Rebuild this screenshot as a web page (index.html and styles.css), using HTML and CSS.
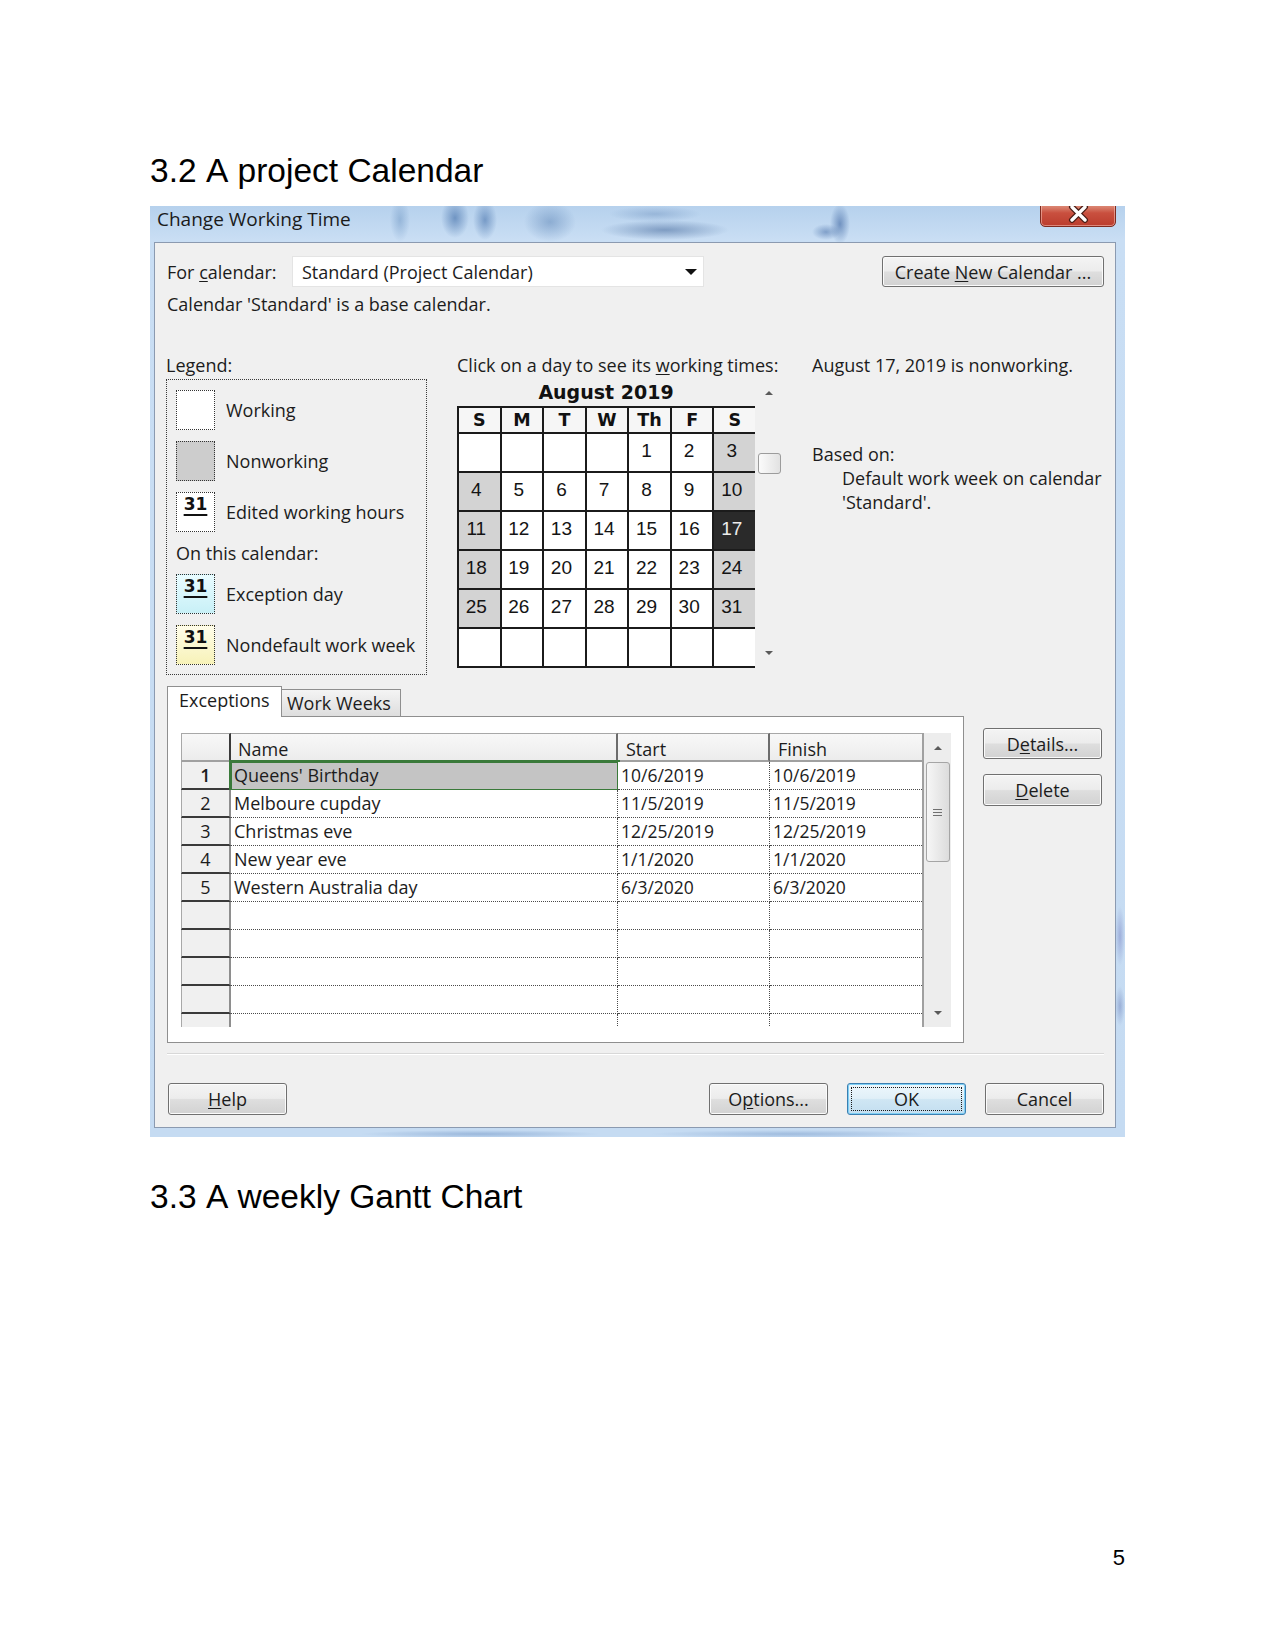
FILE: index.html
```html
<!DOCTYPE html>
<html lang="en">
<head>
<meta charset="utf-8">
<title>3.2 A project Calendar</title>
<link rel="stylesheet" href="styles.css">
</head>
<body>
<div class="page">
  <h2 class="heading h-first">3.2 A project Calendar</h2>

  <div class="dialog">
    <div class="titlebar">Change Working Time</div>
    <div class="close-btn">
      <svg width="76" height="31" viewBox="0 0 76 31">
        <path d="M32 11 L45 24 M45 11 L32 24" stroke="#4a1d16" stroke-width="6" stroke-linecap="round"/>
        <path d="M32 11 L45 24 M45 11 L32 24" stroke="#ffffff" stroke-width="3.4" stroke-linecap="round"/>
      </svg>
    </div>

    <div class="frame">
      <div class="row-top">
        <span class="lbl-for">For <u>c</u>alendar:</span>
        <div class="combo"><span class="combo-text">Standard (Project Calendar)</span><span class="combo-arrow"></span></div>
        <button class="btn btn-create"><span>Create <u>N</u>ew Calendar ...</span></button>
      </div>
      <div class="base-note">Calendar 'Standard' is a base calendar.</div>

      <div class="middle">
        <div class="legend-col">
          <div class="cap">Legend:</div>
          <div class="legend-box">
            <div class="leg-item"><span class="sw sw-work"></span><span>Working</span></div>
            <div class="leg-item"><span class="sw sw-non"></span><span>Nonworking</span></div>
            <div class="leg-item"><span class="sw sw-edit"><b>31</b></span><span>Edited working hours</span></div>
            <div class="on-cal">On this calendar:</div>
            <div class="leg-item"><span class="sw sw-exc"><b>31</b></span><span>Exception day</span></div>
            <div class="leg-item"><span class="sw sw-nd"><b>31</b></span><span>Nondefault work week</span></div>
          </div>
        </div>

        <div class="cal-col">
          <div class="cap">Click on a day to see its <u>w</u>orking times:</div>
          <div class="cal-wrap">
            <div class="cal">
              <div class="cal-title">August 2019</div>
              <div class="cal-grid">
                <div class="dh">S</div><div class="dh">M</div><div class="dh">T</div><div class="dh">W</div><div class="dh">Th</div><div class="dh">F</div><div class="dh">S</div>
                <div class="d"></div><div class="d"></div><div class="d"></div><div class="d"></div><div class="d">1</div><div class="d">2</div><div class="d nw">3</div>
                <div class="d nw">4</div><div class="d">5</div><div class="d">6</div><div class="d">7</div><div class="d">8</div><div class="d">9</div><div class="d nw">10</div>
                <div class="d nw">11</div><div class="d">12</div><div class="d">13</div><div class="d">14</div><div class="d">15</div><div class="d">16</div><div class="d sel">17</div>
                <div class="d nw">18</div><div class="d">19</div><div class="d">20</div><div class="d">21</div><div class="d">22</div><div class="d">23</div><div class="d nw">24</div>
                <div class="d nw">25</div><div class="d">26</div><div class="d">27</div><div class="d">28</div><div class="d">29</div><div class="d">30</div><div class="d nw">31</div>
                <div class="d"></div><div class="d"></div><div class="d"></div><div class="d"></div><div class="d"></div><div class="d"></div><div class="d"></div>
              </div>
            </div>
            <div class="cal-scroll">
              <div class="arr-box"><span class="tri-up"></span></div>
              <div class="cal-thumb"></div>
              <div class="arr-box arr-bottom"><span class="tri-down"></span></div>
            </div>
          </div>
        </div>

        <div class="info-col">
          <div class="cap">August 17, 2019 is nonworking.</div>
          <div class="based">Based on:</div>
          <div class="based-desc">Default work week on calendar<br>'Standard'.</div>
        </div>
      </div>

      <div class="lower">
        <div class="tabs-area">
          <div class="tabs">
            <div class="tab tab-active">Exceptions</div>
            <div class="tab tab-inactive">Work Weeks</div>
          </div>
          <div class="panel">
            <div class="grid-wrap">
              <div class="xt">
                <div class="hc hc-corner"></div><div class="hc hc-name">Name</div><div class="hc hc-start">Start</div><div class="hc hc-fin">Finish</div>

                <div class="rh rh-sel">1</div><div class="c sel">Queens' Birthday</div><div class="c dt">10/6/2019</div><div class="c dt fin">10/6/2019</div>
                <div class="rh">2</div><div class="c">Melboure cupday</div><div class="c dt">11/5/2019</div><div class="c dt fin">11/5/2019</div>
                <div class="rh">3</div><div class="c">Christmas eve</div><div class="c dt">12/25/2019</div><div class="c dt fin">12/25/2019</div>
                <div class="rh">4</div><div class="c">New year eve</div><div class="c dt">1/1/2020</div><div class="c dt fin">1/1/2020</div>
                <div class="rh">5</div><div class="c">Western Australia day</div><div class="c dt">6/3/2020</div><div class="c dt fin">6/3/2020</div>
                <div class="rh"></div><div class="c"></div><div class="c"></div><div class="c fin"></div>
                <div class="rh"></div><div class="c"></div><div class="c"></div><div class="c fin"></div>
                <div class="rh"></div><div class="c"></div><div class="c"></div><div class="c fin"></div>
                <div class="rh"></div><div class="c"></div><div class="c"></div><div class="c fin"></div>
                <div class="rh"></div><div class="c"></div><div class="c"></div><div class="c fin"></div>
              </div>
              <div class="vscroll">
                <div class="vs-up"><span class="tri-up"></span></div>
                <div class="vs-thumb"><span class="grip"></span></div>
                <div class="vs-down"><span class="tri-down"></span></div>
              </div>
            </div>
          </div>
        </div>
        <div class="side-btns">
          <button class="btn btn-details"><span>D<u>e</u>tails...</span></button>
          <button class="btn btn-delete"><span><u>D</u>elete</span></button>
        </div>
      </div>

      <div class="sep"></div>

      <div class="bottom-btns">
        <button class="btn btn-help"><span><u>H</u>elp</span></button>
        <button class="btn btn-options"><span>O<u>p</u>tions...</span></button>
        <button class="btn btn-ok"><span class="focus">OK</span></button>
        <button class="btn btn-cancel"><span>Cancel</span></button>
      </div>
    </div>
  </div>

  <h2 class="heading h-second">3.3 A weekly Gantt Chart</h2>

  <div class="footer">5</div>
</div>
</body>
</html>
```

FILE: styles.css
```css
* { box-sizing: border-box; }

html, body {
  margin: 0;
  padding: 0;
  background: #ffffff;
}

.page {
  width: 1275px;
  height: 1651px;
  padding: 0 150px 80px 150px;
  display: flex;
  flex-direction: column;
  font-family: "Liberation Sans", Arial, sans-serif;
  color: #000;
}

.heading {
  font-family: "Liberation Sans", Arial, sans-serif;
  font-size: 33.5px;
  font-weight: normal;
  font-kerning: none;
  line-height: 38px;
  margin: 0;
  color: #000;
}
.h-first { margin-top: 152px; margin-bottom: 16px; }
.h-second { margin-top: 41px; }

.footer {
  margin-top: auto;
  text-align: right;
  font-size: 22px;
  line-height: 26px;
}

/* ---------- dialog ---------- */
.dialog {
  position: relative;
  overflow: hidden;
  height: 931px;
  flex: none;
  padding: 0 9px 9px 4px;
  background:
    radial-gradient(ellipse 10px 22px at 250px 14px, rgba(110, 150, 195, 0.5), transparent),
    radial-gradient(ellipse 14px 20px at 305px 12px, rgba(60, 105, 165, 0.6), transparent),
    radial-gradient(ellipse 12px 20px at 335px 14px, rgba(60, 105, 165, 0.55), transparent),
    radial-gradient(ellipse 26px 20px at 400px 16px, rgba(90, 130, 180, 0.5), transparent),
    radial-gradient(ellipse 64px 10px at 515px 24px, rgba(70, 105, 155, 0.55), transparent),
    radial-gradient(ellipse 46px 8px at 505px 8px, rgba(110, 145, 190, 0.45), transparent),
    radial-gradient(ellipse 10px 20px at 690px 18px, rgba(60, 100, 160, 0.6), transparent),
    radial-gradient(ellipse 14px 8px at 676px 26px, rgba(60, 100, 160, 0.5), transparent),
    radial-gradient(ellipse 5px 30px at 970px 730px, rgba(110, 120, 190, 0.45), transparent),
    radial-gradient(ellipse 5px 20px at 970px 800px, rgba(90, 110, 175, 0.4), transparent),
    radial-gradient(ellipse 120px 4px at 330px 928px, rgba(90, 130, 185, 0.4), transparent),
    radial-gradient(ellipse 140px 4px at 640px 928px, rgba(90, 130, 185, 0.35), transparent),
    linear-gradient(#b6d1ed 0px, #c9def4 34px, #c5dbf2 100%);
}

.titlebar {
  height: 36px;
  padding-left: 3px;
  font-family: "Open Sans", "Noto Sans", sans-serif;
  font-size: 19px;
  line-height: 26px;
  color: #1a1a1a;
  white-space: nowrap;
}

.close-btn {
  position: absolute;
  top: -10px;
  right: 9px;
  width: 76px;
  height: 31px;
  border: 1px solid #7e2a1f;
  border-radius: 5px;
  background: linear-gradient(#eaa393 0%, #d9806d 35%, #c9503f 55%, #bb3c2d 100%);
  box-shadow: inset 0 0 0 1px rgba(255, 210, 200, 0.5);
}
.close-btn svg { display: block; margin: -1px; }

.frame {
  height: 886px;
  border: 1px solid #8b9ab0;
  background: #f0f0f0;
  padding: 13px 11px 12px 12px;
  display: flex;
  flex-direction: column;
  font-family: "Open Sans", "Noto Sans", sans-serif;
  font-size: 18px;
  line-height: 24px;
  color: #1c1c1c;
}

u { text-underline-offset: 2px; }

/* top row */
.row-top {
  display: flex;
  align-items: center;
  height: 31px;
}
.lbl-for { width: 125px; flex: none; white-space: nowrap; }
.combo {
  width: 412px;
  height: 31px;
  flex: none;
  background: #ffffff;
  border: 1px solid #e4e4e4;
  display: flex;
  align-items: center;
  padding: 0 6px 0 9px;
}
.combo-text { flex: 1; white-space: nowrap; }
.combo-arrow {
  width: 0;
  height: 0;
  border-left: 6px solid transparent;
  border-right: 6px solid transparent;
  border-top: 6px solid #111;
}

.btn {
  font: inherit;
  color: #1c1c1c;
  border: 1px solid #707070;
  border-radius: 3px;
  background: linear-gradient(#f4f4f4 0%, #ececec 48%, #dedede 52%, #d2d2d2 100%);
  box-shadow: inset 0 0 0 1px #fbfbfb;
  padding: 0;
  display: flex;
  align-items: center;
  justify-content: center;
  white-space: nowrap;
  flex: none;
}
.btn-create { margin-left: auto; width: 222px; height: 31px; }

.base-note { margin-top: 5px; height: 24px; white-space: nowrap; }

/* middle */
.middle { display: flex; margin-top: 35px; }
.cap { height: 24px; line-height: 28px; white-space: nowrap; }

.legend-col { width: 261px; margin-left: -1px; flex: none; }
.legend-box {
  margin-top: 4px;
  border: 1px dotted #3a3a3a;
  padding: 10px 9px 9px 9px;
}
.leg-item {
  display: flex;
  align-items: center;
  height: 40px;
  white-space: nowrap;
}
.leg-item + .leg-item { margin-top: 11px; }
.on-cal { margin: 9px 0; height: 24px; white-space: nowrap; }
.sw {
  width: 39px;
  height: 40px;
  flex: none;
  border: 1px dotted #333;
  margin-right: 11px;
  display: flex;
  justify-content: center;
  align-items: flex-start;
  padding-top: 1px;
}
.sw b {
  font-family: "DejaVu Sans", Verdana, sans-serif;
  font-weight: bold;
  font-size: 17px;
  line-height: 20px;
  color: #111;
  text-decoration: underline;
  text-decoration-thickness: 2px;
  text-underline-offset: 4px;
}
.sw-work { background: #ffffff; }
.sw-non { background: #cdcdcd; }
.sw-edit { background: #ffffff; }
.sw-exc { background: linear-gradient(#e9fcff, #c8f0f7); }
.sw-nd { background: linear-gradient(#fffdea, #f7f2b8); }

.cal-col { margin-left: 30px; width: 324px; flex: none; }
.cal-wrap { display: flex; }
.cal { width: 298px; flex: none; }
.cal-title {
  margin-top: 3px;
  height: 28px;
  text-align: center;
  font-family: "DejaVu Sans", Verdana, sans-serif;
  font-weight: bold;
  font-size: 19px;
  line-height: 28px;
  color: #111;
}
.cal-grid {
  display: grid;
  grid-template-columns: repeat(7, 1fr);
  grid-template-rows: 24px repeat(6, 37px);
  gap: 2px;
  padding: 2px 0 2px 2px;
  background: #1b1b1b;
}
.dh {
  background: #f6f6f6;
  display: flex;
  align-items: center;
  justify-content: center;
  font-family: "DejaVu Sans", Verdana, sans-serif;
  font-weight: bold;
  font-size: 17.5px;
  color: #111;
}
.d {
  background: #ffffff;
  display: flex;
  align-items: center;
  justify-content: center;
  padding: 0 6px 4px 0;
  font-family: "Liberation Sans", Arial, sans-serif;
  font-size: 19px;
  color: #141414;
}
.d.nw { background: #d3d3d3; }
.d.sel { background: #2a2a2a; color: #ececec; }

.cal-scroll {
  width: 24px;
  height: 284px;
  margin: 8px 0 0 2px;
  display: flex;
  flex-direction: column;
  align-items: center;
}
.arr-box {
  height: 20px;
  width: 24px;
  display: flex;
  align-items: center;
  justify-content: center;
}
.arr-bottom { margin-top: auto; margin-bottom: 4px; }
.cal-thumb {
  margin-top: 50px;
  width: 23px;
  height: 21px;
  border: 1px solid #9c9c9c;
  border-radius: 3px;
  background: linear-gradient(to right, #fbfbfb, #e2e2e2);
}
.tri-up {
  width: 0; height: 0;
  border-left: 4px solid transparent;
  border-right: 4px solid transparent;
  border-bottom: 4px solid #5a5a5a;
}
.tri-down {
  width: 0; height: 0;
  border-left: 4px solid transparent;
  border-right: 4px solid transparent;
  border-top: 4px solid #5a5a5a;
}

.info-col { margin-left: 31px; flex: 1; min-width: 0; }
.based { margin-top: 67px; height: 24px; }
.based-desc { padding-left: 30px; line-height: 24px; white-space: nowrap; }

/* lower */
.lower { display: flex; margin-top: 11px; }
.tabs-area { width: 797px; flex: none; }
.tabs { display: flex; align-items: flex-end; height: 30px; }
.tab { white-space: nowrap; }
.tab-active {
  position: relative;
  z-index: 1;
  width: 115px;
  height: 31px;
  margin-bottom: -1px;
  border: 1px solid #8f8f8f;
  border-bottom: none;
  background: #ffffff;
  padding: 1px 0 0 11px;
}
.tab-inactive {
  width: 119px;
  height: 27px;
  border: 1px solid #8f8f8f;
  border-left: none;
  border-bottom: none;
  background: linear-gradient(#f4f4f4, #dedede);
  padding: 1px 0 0 5px;
}
.panel {
  height: 327px;
  border: 1px solid #8f8f8f;
  background: #ffffff;
  padding: 16px 11px 15px 13px;
}
.grid-wrap {
  display: flex;
  height: 294px;
  overflow: hidden;
}
.xt {
  display: grid;
  grid-template-columns: 50px 387px 152px 152px;
  grid-template-rows: 29px;
  grid-auto-rows: 28px;
  width: 741px;
  flex: none;
}
.hc {
  background: linear-gradient(#f8f8f8, #ececec);
  border-top: 1px solid #a8a8a8;
  border-bottom: 2px solid #a0a0a0;
  padding: 3px 0 0 7px;
  white-space: nowrap;
}
.hc-corner { border-left: 1px solid #a8a8a8; border-right: 2px solid #3a3a3a; }
.hc-name { border-right: 2px solid #6c6c6c; padding-left: 7px; }
.hc-start { border-right: 2px solid #6c6c6c; padding-left: 8px; }
.hc-fin { padding-left: 8px; }

.rh {
  background: #f0f0f0;
  border-left: 1px solid #a8a8a8;
  border-right: 2px solid #8e8e8e;
  border-bottom: 2px solid #3a3a3a;
  text-align: center;
  line-height: 26px;
}
.rh-sel { font-weight: 600; }
.c {
  background: #ffffff;
  border-bottom: 1px dotted #4a4a4a;
  border-right: 1px dotted #4a4a4a;
  padding-left: 3px;
  line-height: 27px;
  white-space: nowrap;
  overflow: hidden;
}
.c.dt { font-size: 17.5px; }
.c.fin { border-right: none; }
.c.sel {
  background: #c4c4c4;
  outline: 3px solid #3a7a3a;
  outline-offset: -1px;
}

.vscroll {
  width: 29px;
  flex: none;
  border-left: 2px solid #a0a0a0;
  background: #ededed;
  display: flex;
  flex-direction: column;
  align-items: center;
}
.vs-up {
  height: 29px;
  width: 100%;
  display: flex;
  align-items: center;
  justify-content: center;
}
.vs-thumb {
  width: 24px;
  height: 100px;
  border: 1px solid #a5a5a5;
  border-radius: 3px;
  background: linear-gradient(to right, #f6f6f6, #dcdcdc);
  display: flex;
  align-items: center;
  justify-content: center;
}
.grip {
  width: 9px;
  height: 7px;
  background: repeating-linear-gradient(#707070 0 1px, transparent 1px 3px);
}
.vs-down {
  margin-top: 141px;
  height: 20px;
  width: 100%;
  display: flex;
  align-items: center;
  justify-content: center;
}

.side-btns {
  margin-left: 19px;
  width: 119px;
  display: flex;
  flex-direction: column;
}
.btn-details { margin-top: 42px; height: 31px; width: 119px; }
.btn-delete { margin-top: 15px; height: 32px; width: 119px; }

.sep {
  margin-top: 10px;
  height: 2px;
  border-top: 1px solid #d8d8d8;
  border-bottom: 1px solid #ffffff;
}

.bottom-btns {
  display: flex;
  margin-top: 28px;
  height: 32px;
}
.bottom-btns .btn { width: 119px; height: 32px; }
.btn-help { margin-left: 1px; }
.btn-options { margin-left: auto; }
.btn-ok {
  margin-left: 19px;
  padding: 3px;
  border-color: #3c7fb1;
  background: linear-gradient(#eef7fc 0%, #e0eff8 48%, #cfe6f4 52%, #c3def0 100%);
  box-shadow: inset 0 0 0 1px #7fd0f5;
}
.btn-cancel { margin-left: 19px; }
.focus {
  align-self: stretch;
  flex: 1;
  border: 1px dotted #1a1a1a;
  display: flex;
  align-items: center;
  justify-content: center;
}
```
